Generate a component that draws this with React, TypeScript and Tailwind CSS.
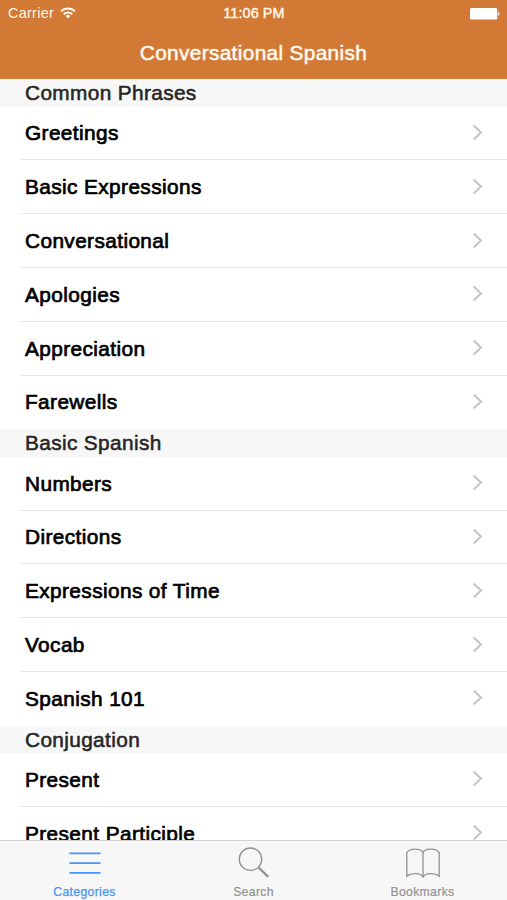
interface ISection {
  title: string;
  items: string[];
}

const sections: ISection[] = [
  {
    title: "Common Phrases",
    items: [
      "Greetings",
      "Basic Expressions",
      "Conversational",
      "Apologies",
      "Appreciation",
      "Farewells",
    ],
  },
  {
    title: "Basic Spanish",
    items: ["Numbers", "Directions", "Expressions of Time", "Vocab", "Spanish 101"],
  },
  {
    title: "Conjugation",
    items: ["Present", "Present Participle"],
  },
];

const WifiIcon = () => (
  <svg width="16" height="12" viewBox="0 0 16 12" fill="none" stroke="#fff8f0" strokeWidth="1.9">
    <path d="M1 4.4a10 10 0 0 1 14 0" />
    <path d="M3.7 7.2a6.2 6.2 0 0 1 8.6 0" />
    <path d="M8 11.4 5.6 9a3.4 3.4 0 0 1 4.8 0z" fill="#fff8f0" stroke="none" />
  </svg>
);

const BatteryIcon = () => (
  <svg width="30" height="12" viewBox="0 0 30 12" fill="#fff">
    <rect x="0" y="0" width="27.3" height="11.5" rx="1.5" />
    <path d="M28.2 3.8c1.8.6 1.8 3.4 0 4z" />
  </svg>
);

const Chevron = () => (
  <svg width="12" height="18" viewBox="0 0 12 18" fill="none" stroke="#c4c4c6" strokeWidth="2">
    <path d="M1.7 1.5 9 8.5l-7.3 7" />
  </svg>
);

const ListIcon = () => (
  <svg width="32" height="32" viewBox="0 0 32 32" stroke="#4595f2" strokeWidth="1.7">
    <path d="M.5 6.3h31M.5 16.1h31M.5 25.8h31" />
  </svg>
);

const SearchIcon = () => (
  <svg width="32" height="32" viewBox="0 0 32 32" fill="none" stroke="#929292">
    <circle cx="12.5" cy="12.2" r="11.2" strokeWidth="1.3" />
    <path d="m20.4 20.4 9.8 9.4" strokeWidth="2.3" />
  </svg>
);

const BookIcon = () => (
  <svg width="34" height="32" viewBox="0 0 34 32" fill="none" stroke="#929292" strokeWidth="1.3">
    <path d="M17 5.6C15 .9 3.5.9.8 5.6v23.6c4-3.6 13.7-3.6 16.2.6 2.5-4.2 12.2-4.2 16.2-.6V5.6C30.5.9 19 .9 17 5.6z" />
    <path d="M17 5.6v24.6" />
  </svg>
);

const Header = () => (
  <header className="h-[79.4px] shrink-0 bg-[#d27a35] text-[#fff8ee]">
    <div className="grid h-[27px] grid-cols-3 items-center pl-2 pr-[7px] text-[14.4px]">
      <div className="flex items-center gap-[6px] tracking-[0.3px]">
        <span className="pt-px">Carrier</span>
        <WifiIcon />
      </div>
      <div className="pt-px text-center tracking-[0.1px] [-webkit-text-stroke:0.4px_#fff8ee]">
        11:06 PM
      </div>
      <div className="flex justify-end">
        <BatteryIcon />
      </div>
    </div>
    <h1 className="text-center text-[20.8px] leading-[51px] tracking-[0.35px] [-webkit-text-stroke:0.55px_#fff8ee]">
      Conversational Spanish
    </h1>
  </header>
);

const Section = ({ title, items }: ISection) => (
  <section>
    <h2 className="h-[27.3px] bg-[#f7f7f7] pl-[25px] text-[20.8px] leading-[28.5px] tracking-[0.37px] text-[#262626] [-webkit-text-stroke:0.55px_#262626]">
      {title}
    </h2>
    <ul className="pl-5">
      {items.map((item) => (
        <li
          key={item}
          className="flex h-[53.8px] items-center justify-between border-b border-[#e9e9e9] pl-[5px] pr-[23px] last:border-transparent"
        >
          <span className="text-[20.8px] tracking-[0.4px] text-black [-webkit-text-stroke:0.7px_#000]">
            {item}
          </span>
          <Chevron />
        </li>
      ))}
    </ul>
  </section>
);

const TabBar = () => (
  <nav className="grid h-[60px] shrink-0 grid-cols-3 border-t border-[#d2d2d2] bg-[#f7f7f7] text-[12.2px] tracking-[0.35px] text-[#929292]">
    <div className="flex flex-col items-center pt-[6px] text-[#4595f2] [-webkit-text-stroke:0.25px_#4595f2]">
      <ListIcon />
      <span className="leading-[26px]">Categories</span>
    </div>
    <div className="flex flex-col items-center pt-[6px] [-webkit-text-stroke:0.2px_#929292]">
      <SearchIcon />
      <span className="leading-[26px]">Search</span>
    </div>
    <div className="flex flex-col items-center pt-[6px] [-webkit-text-stroke:0.2px_#929292]">
      <BookIcon />
      <span className="leading-[26px]">Bookmarks</span>
    </div>
  </nav>
);

export default function App() {
  return (
    <div className="flex h-[900px] w-[507px] flex-col overflow-hidden bg-white font-['Liberation_Sans',Arial,sans-serif]">
      <Header />
      <main className="min-h-0 flex-1 overflow-hidden">
        {sections.map((section) => (
          <Section key={section.title} {...section} />
        ))}
      </main>
      <TabBar />
    </div>
  );
}
